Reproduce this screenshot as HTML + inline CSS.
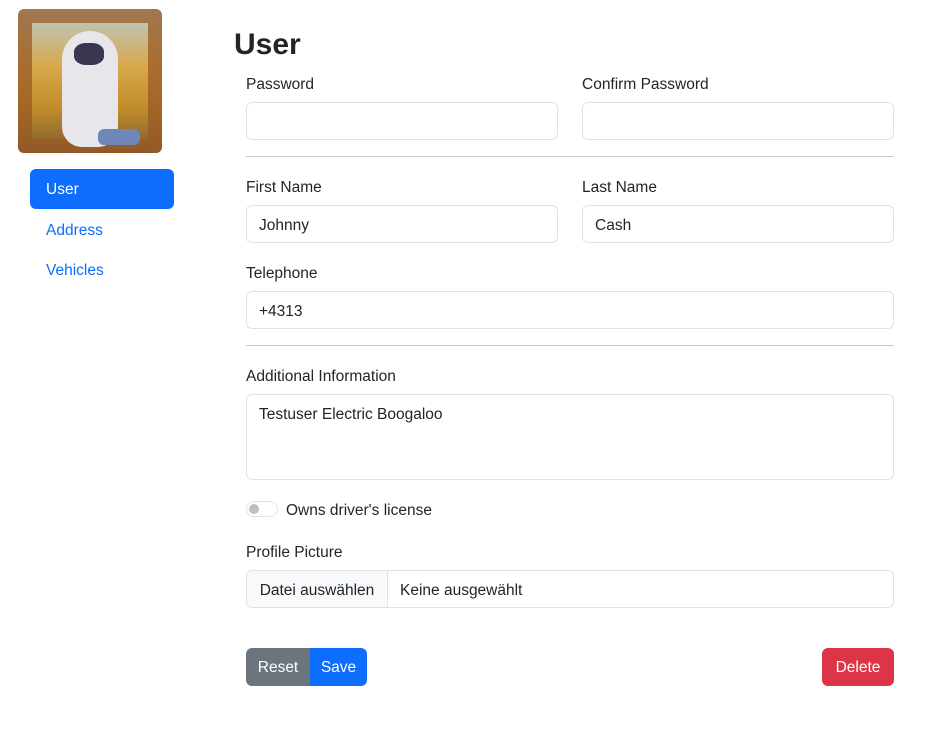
<!DOCTYPE html>
<html><head><style>
body{margin:0;width:933px;height:731px;background:#fff;font-family:"Liberation Sans",sans-serif;font-size:15.5px;color:#212529;position:relative;overflow:hidden}
.a{position:absolute}
.inp{position:absolute;box-sizing:border-box;border:1px solid #dee2e6;border-radius:6px;height:38px;padding:0 12px;line-height:39px;background:#fff}
.lbl{position:absolute;line-height:23px}
hr{position:absolute;margin:0;border:0;border-top:1px solid #c8c9ca;left:246px;width:648px}
.btn{position:absolute;height:38px;line-height:40px;color:#fff;text-align:center;top:648px}
</style></head><body>
<div class="a" style="left:18px;top:9px;width:144px;height:144px;border-radius:6px;overflow:hidden;background:linear-gradient(180deg,#b9cbd0 0%,#d7a84a 40%,#c08b2a 70%,#7a5a30 100%)">
<div class="a" style="left:0;top:0;width:144px;height:144px;box-sizing:border-box;border:14px solid #9a5a25;border-radius:6px;opacity:.75"></div>
<div class="a" style="left:44px;top:22px;width:56px;height:116px;background:#e8e6ea;border-radius:28px 28px 20px 20px"></div>
<div class="a" style="left:56px;top:34px;width:30px;height:22px;background:#3a3550;border-radius:40%"></div>
<div class="a" style="left:80px;top:120px;width:42px;height:16px;background:#6f86b8;border-radius:6px"></div>
</div>
<div class="a" style="left:30px;top:169px;width:144px;height:40px;background:#0d6efd;border-radius:6px;color:#fff;line-height:42px;padding-left:16px;box-sizing:border-box">User</div>
<div class="a" style="left:46px;top:219px;color:#0d6efd;line-height:23px">Address</div>
<div class="a" style="left:46px;top:259px;color:#0d6efd;line-height:23px">Vehicles</div>
<div class="a" style="left:234px;top:26px;font-size:30px;font-weight:bold;line-height:38px">User</div>
<div class="lbl" style="left:246px;top:73px">Password</div>
<div class="lbl" style="left:582px;top:73px">Confirm Password</div>
<div class="inp" style="left:246px;top:102px;width:312px"></div>
<div class="inp" style="left:582px;top:102px;width:312px"></div>
<hr style="top:156px">
<div class="lbl" style="left:246px;top:176px">First Name</div>
<div class="lbl" style="left:582px;top:176px">Last Name</div>
<div class="inp" style="left:246px;top:205px;width:312px">Johnny</div>
<div class="inp" style="left:582px;top:205px;width:312px">Cash</div>
<div class="lbl" style="left:246px;top:262px">Telephone</div>
<div class="inp" style="left:246px;top:291px;width:648px">+4313</div>
<hr style="top:345px">
<div class="lbl" style="left:246px;top:365px">Additional Information</div>
<div class="inp" style="left:246px;top:394px;width:648px;height:86px;line-height:20px;padding-top:10px">Testuser Electric Boogaloo</div>
<div class="a" style="left:246px;top:501px;width:30px;height:14px;border:1px solid #dee2e6;border-radius:8px"><div class="a" style="left:2px;top:2px;width:10px;height:10px;border-radius:50%;background:#bfbfbf"></div></div>
<div class="lbl" style="left:286px;top:499px">Owns driver's license</div>
<div class="lbl" style="left:246px;top:541px">Profile Picture</div>
<div class="inp" style="left:246px;top:570px;width:648px;padding:0">
<div class="a" style="left:0;top:0;width:140px;height:36px;background:#f8f9fa;border-right:1px solid #dee2e6;border-radius:6px 0 0 6px;text-align:center">Datei auswählen</div>
<div class="a" style="left:153px;top:0">Keine ausgewählt</div></div>
<div class="btn" style="left:246px;width:64px;background:#6c757d;border-radius:6px 0 0 6px">Reset</div>
<div class="btn" style="left:310px;width:57px;background:#0d6efd;border-radius:0 6px 6px 0">Save</div>
<div class="btn" style="left:822px;width:72px;background:#dc3545;border-radius:6px">Delete</div>
</body></html>
